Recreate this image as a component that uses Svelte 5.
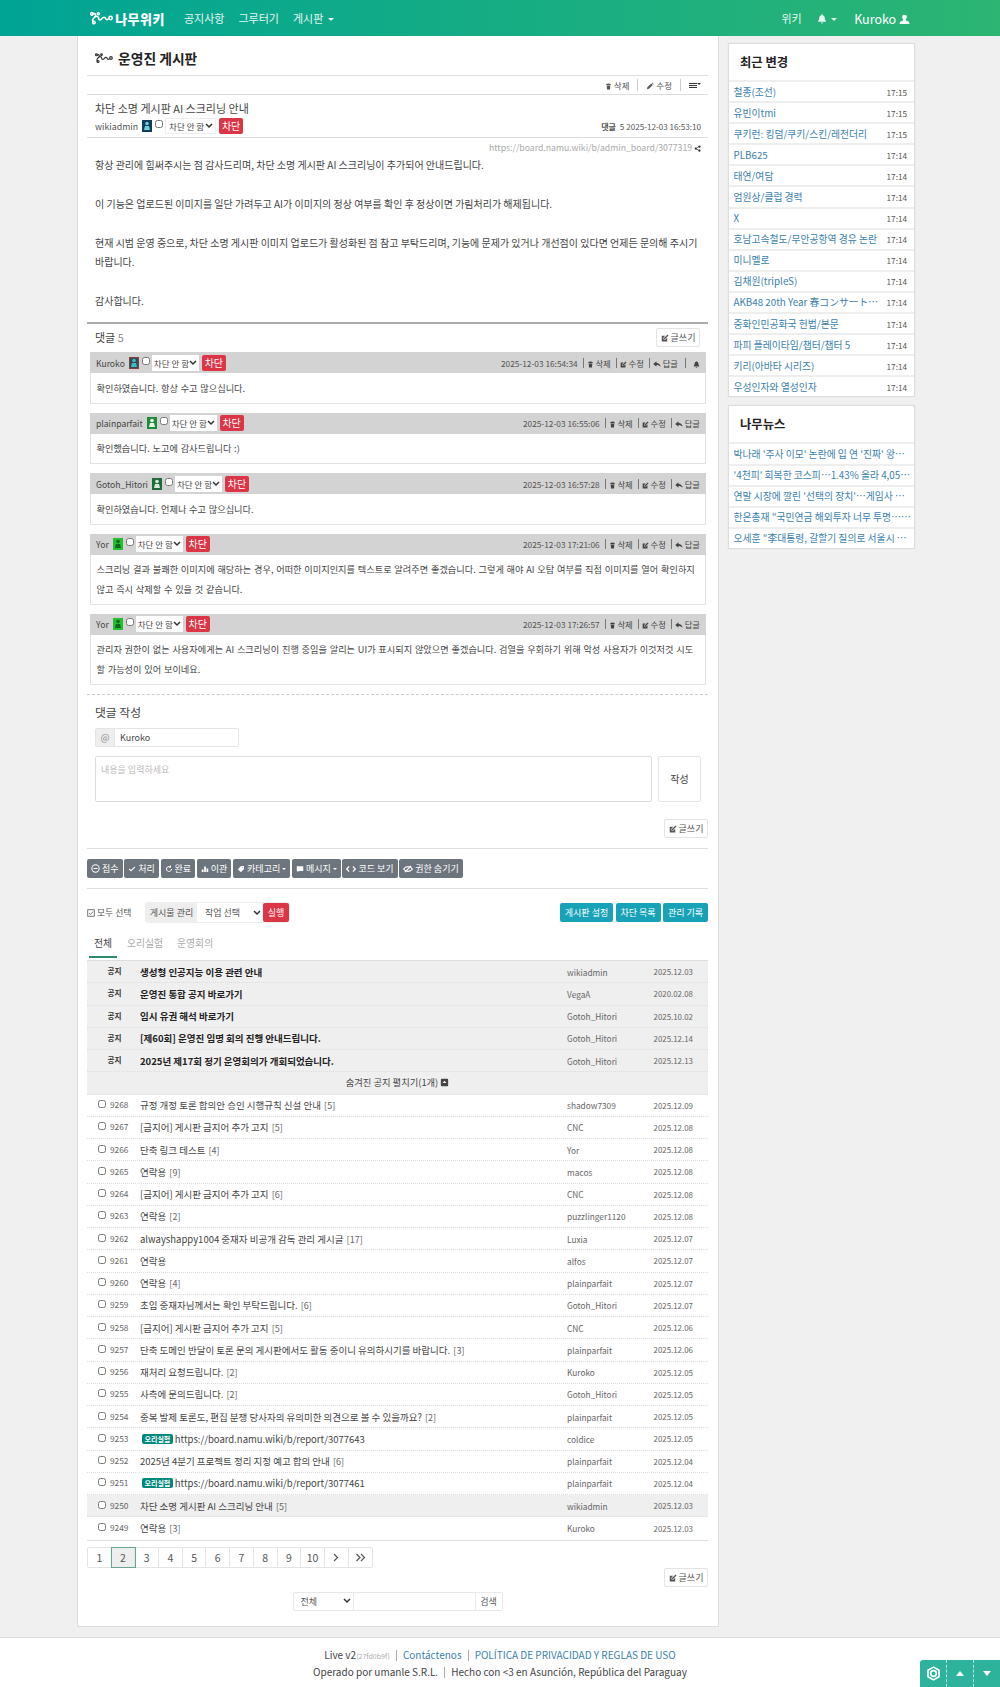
<script>
  const icons = {
    trash: "M5.5 1h5v1.5H13V5H3V2.500h2.500zM4 6h8l-.6 9H4.600z",
    pencil: "M2 14.500l.8-3.800L10.500 3l3 3-7.700 7.700zM11.500 2l1-1 3 3-1 1z",
    edit: "M1.500 3.500h7L5 7v4h4l3.500-3.500V15h-11zM6 10V8l7-7 2 2-7 7z",
    reply: "M7 2.500L.5 8 7 13.500V10c3.500 0 6 1 8.500 3.500C14.500 9 11.500 6.200 7 6z",
    bell: "M8 .5a1.200 1.200 0 011.200 1.300c2.300.6 3.300 2.600 3.300 5 0 2 .6 3.300 1.800 4.400V12.500H1.700v-1.300C2.900 10.100 3.500 8.800 3.500 6.800c0-2.400 1-4.400 3.300-5A1.200 1.200 0 018 .5zM6.300 13.500h3.400a1.700 1.700 0 01-3.400 0z",
    user: "M8 1a3.300 3.300 0 013.300 3.500c0 1.600-.8 3-1.500 3.700v1.200c2.200.6 5.200 1.500 5.200 3.600v1.500H1v-1.500c0-2.100 3-3 5.200-3.600V8.200C5.500 7.500 4.700 6.100 4.700 4.500A3.300 3.300 0 018 1z",
    share: "M12.500 1a2.500 2.500 0 11-1.900 4.100L6.400 7.300a2.500 2.500 0 010 1.400l4.200 2.200a2.500 2.500 0 11-.7 1.300L5.600 10a2.500 2.500 0 110-4l4.300-2.200A2.500 2.500 0 0112.500 1z",
    check: "M1.500 8.500l1.500-1.500 3 3 7-7 1.500 1.500L6 13z",
    bars: "M1.500 9h3.500v5H1.500zM6.300 3h3.500v11H6.300zM11 7h3.500v7H11z",
    tag: "M1.500 8.500L8 2h6v6l-6.500 6.500zM11.500 3.500a1 1 0 100 2 1 1 0 000-2z",
    chat: "M1.500 2.500h13v9.500H6l-3 2.500V12H1.500z",
    plusbox: "M3 1.500h10A1.500 1.500 0 0114.500 3v10a1.500 1.500 0 01-1.500 1.500H3A1.500 1.500 0 011.500 13V3A1.500 1.500 0 013 1.500zM8 5L4.500 9h7z"
  };

  const avatars = {
    Kuroko: ["#3a4a55", "#35c0c8", "#c0392b"],
    plainparfait: ["#1f8a3c", "#e8f5e8", "#1f8a3c"],
    Gotoh_Hitori: ["#1e6b3a", "#d8e8dc", "#1e6b3a"],
    Yor: ["#22c02c", "#0c6a1a", "#22c02c"],
    wikiadmin: ["#123c5c", "#6fd0d8", "#123c5c"]
  };

  const comments = [
    { who: "Kuroko", when: "2025-12-03 16:54:34", bell: true, lines: "확인하였습니다. 항상 수고 많으십니다." },
    { who: "plainparfait", when: "2025-12-03 16:55:06", lines: "확인했습니다. 노고에 감사드립니다 :)" },
    { who: "Gotoh_Hitori", when: "2025-12-03 16:57:28", lines: "확인하였습니다. 언제나 수고 많으십니다." },
    { who: "Yor", when: "2025-12-03 17:21:06", lines: "스크리닝 결과 불쾌한 이미지에 해당하는 경우, 어떠한 이미지인지를 텍스트로 알려주면 좋겠습니다. 그렇게 해야 AI 오탐 여부를 직접 이미지를 열어 확인하지 않고 즉시 삭제할 수 있을 것 같습니다." },
    { who: "Yor", when: "2025-12-03 17:26:57", lines: "관리자 권한이 없는 사용자에게는 AI 스크리닝이 진행 중임을 알리는 UI가 표시되지 않았으면 좋겠습니다. 검열을 우회하기 위해 악성 사용자가 이것저것 시도할 가능성이 있어 보이네요." }
  ];

  const notices = [
    ["생성형 인공지능 이용 관련 안내", "wikiadmin", "2025.12.03"],
    ["운영진 통합 공지 바로가기", "VegaA", "2020.02.08"],
    ["임시 유권 해석 바로가기", "Gotoh_Hitori", "2025.10.02"],
    ["[제60회] 운영진 임명 회의 진행 안내드립니다.", "Gotoh_Hitori", "2025.12.14"],
    ["2025년 제17회 정기 운영회의가 개회되었습니다.", "Gotoh_Hitori", "2025.12.13"]
  ];

  const posts = [
    [9268, "규정 개정 토론 합의안 승인 시행규칙 신설 안내", "[5]", "shadow7309", "2025.12.09"],
    [9267, "[금지어] 게시판 금지어 추가 고지", "[5]", "CNC", "2025.12.08"],
    [9266, "단축 링크 테스트", "[4]", "Yor", "2025.12.08"],
    [9265, "연락용", "[9]", "macos", "2025.12.08"],
    [9264, "[금지어] 게시판 금지어 추가 고지", "[6]", "CNC", "2025.12.08"],
    [9263, "연락용", "[2]", "puzzlinger1120", "2025.12.08"],
    [9262, "alwayshappy1004 중재자 비공개 감독 관리 게시글", "[17]", "Luxia", "2025.12.07"],
    [9261, "연락용", "", "alfos", "2025.12.07"],
    [9260, "연락용", "[4]", "plainparfait", "2025.12.07"],
    [9259, "초임 중재자님께서는 확인 부탁드립니다.", "[6]", "Gotoh_Hitori", "2025.12.07"],
    [9258, "[금지어] 게시판 금지어 추가 고지", "[5]", "CNC", "2025.12.06"],
    [9257, "단축 도메인 반달이 토론 문의 게시판에서도 활동 중이니 유의하시기를 바랍니다.", "[3]", "plainparfait", "2025.12.06"],
    [9256, "재처리 요청드립니다.", "[2]", "Kuroko", "2025.12.05"],
    [9255, "사측에 문의드립니다.", "[2]", "Gotoh_Hitori", "2025.12.05"],
    [9254, "중복 발제 토론도, 편집 분쟁 당사자의 유의미한 의견으로 볼 수 있을까요?", "[2]", "plainparfait", "2025.12.05"],
    [9253, "https://board.namu.wiki/b/report/3077643", "", "coldice", "2025.12.05", true],
    [9252, "2025년 4분기 프로젝트 정리 지정 예고 합의 안내", "[6]", "plainparfait", "2025.12.04"],
    [9251, "https://board.namu.wiki/b/report/3077461", "", "plainparfait", "2025.12.04", true],
    [9250, "차단 소명 게시판 AI 스크리닝 안내", "[5]", "wikiadmin", "2025.12.03"],
    [9249, "연락용", "[3]", "Kuroko", "2025.12.03"]
  ];

  const recent = [
    ["철종(조선)", "17:15"], ["유빈이tmi", "17:15"], ["쿠키런: 킹덤/쿠키/스킨/레전더리", "17:15"],
    ["PLB625", "17:14"], ["태연/여담", "17:14"], ["엄원상/클럽 경력", "17:14"], ["X", "17:14"],
    ["호남고속철도/무안공항역 경유 논란", "17:14"], ["미니멜로", "17:14"], ["김채원(tripleS)", "17:14"],
    ["AKB48 20th Year 春コンサート…", "17:14"], ["중화인민공화국 헌법/본문", "17:14"],
    ["파피 플레이타임/챕터/챕터 5", "17:14"], ["키리(아바타 시리즈)", "17:14"], ["우성인자와 열성인자", "17:14"]
  ];

  const news = [
    "박나래 '주사 이모' 논란에 입 연 '진짜' 왕…",
    "'4천피' 회복한 코스피…1.43% 올라 4,05…",
    "연말 시장에 깔린 '선택의 장치'…게임사 …",
    "한은총재 \"국민연금 해외투자 너무 투명……",
    "오세훈 \"李대통령, 갈할기 질의로 서울시 …"
  ];

  const tools = [
    ["minus", "접수"], ["check", "처리"], ["redo", "완료"], ["bars", "이관"],
    ["tag", "카테고리", true], ["chat", "메시지", true], ["code", "코드 보기"], ["eye", "권한 숨기기"]
  ];

  const pages = ["1", "2", "3", "4", "5", "6", "7", "8", "9", "10"];
</script>

{#snippet ico(name, size = 8)}
  <svg class="ico" width={size} height={size} viewBox="0 0 16 16" fill="currentColor"><path d={icons[name]} /></svg>
{/snippet}

{#snippet sprout(w, h, stroke)}
  <svg width={w} height={h} viewBox="0 0 36 20" fill="none" stroke={stroke} stroke-width="2.400" stroke-linecap="round">
    <path d="M4 3.500C9 2 10 6 7 9c-3 2.500-4 5-2 7M7 9c3-3 6.500-1.500 6.500 1.500 0 3 3 3.500 5 .5s5-3 6 0c.8 2 2.500 2 4 .5" />
    <circle cx="3" cy="3.500" r="2" />
    <circle cx="6" cy="17" r="2" />
    <circle cx="13" cy="3.500" r="1.600" />
    <circle cx="32" cy="10" r="2.600" />
  </svg>
{/snippet}

{#snippet avatar(who)}
  <svg class="avatar" width="10" height="12" viewBox="0 0 10 12">
    <rect width="10" height="12" fill={avatars[who][0]} stroke={avatars[who][2]} />
    <circle cx="5" cy="3.500" r="1.800" fill={avatars[who][1]} />
    <path d="M2 10l1-4h4l1 4z" fill={avatars[who][1]} />
  </svg>
{/snippet}

{#snippet blockctl()}
  <input class="tick" type="checkbox" />
  <select class="blocksel"><option>차단 안 함</option></select>
  <button class="red">차단</button>
{/snippet}

{#snippet writebtn()}
  <button class="write">{@render ico("edit", 8)} 글쓰기</button>
{/snippet}

<nav class="nav">
  <div class="brand">{@render sprout(25, 16, "#fff")}<span>나무위키</span></div>
  <a href="#a">공지사항</a>
  <a href="#a">그루터기</a>
  <a href="#a">게시판 <i class="caret"></i></a>
  <div class="navright">
    <a href="#a">위키</a>
    <a class="bell" href="#a">{@render ico("bell", 10)} <i class="caret"></i></a>
    <a class="me" href="#a">Kuroko {@render ico("user", 11)}</a>
  </div>
</nav>

<div class="page">
  <main class="article">
    <h1>{@render sprout(18, 12, "#333")}<span>운영진 게시판</span></h1>

    <div class="actions">
      <span>{@render ico("trash", 7)} 삭제</span>
      <i class="bar"></i>
      <span>{@render ico("pencil", 8)} 수정</span>
      <i class="bar"></i>
      <span class="menu"><i></i><i></i><i></i><b class="caret mini"></b></span>
    </div>

    <div class="posthead">
      <div class="posttitle">차단 소명 게시판 AI 스크리닝 안내</div>
      <div class="postmeta">
        <span class="who">wikiadmin</span>
        {@render avatar("wikiadmin")}
        {@render blockctl()}
        <span class="stats"><b>댓글</b> <span>5</span> 2025-12-03 16:53:10</span>
      </div>
    </div>

    <div class="url">https://board.namu.wiki/b/admin_board/3077319 {@render ico("share", 7)}</div>

    <div class="content">
      <p>항상 관리에 힘써주시는 점 감사드리며, 차단 소명 게시판 AI 스크리닝이 추가되어 안내드립니다.</p>
      <p><br /></p>
      <p>이 기능은 업로드된 이미지를 일단 가려두고 AI가 이미지의 정상 여부를 확인 후 정상이면 가림처리가 해제됩니다.</p>
      <p><br /></p>
      <p>현재 시범 운영 중으로, 차단 소명 게시판 이미지 업로드가 활성화된 점 참고 부탁드리며, 기능에 문제가 있거나 개선점이 있다면 언제든 문의해 주시기 바랍니다.</p>
      <p><br /></p>
      <p>감사합니다.</p>
    </div>

    <div class="cmthead">
      <span class="cmtcount">댓글 <em>5</em></span>
      {@render writebtn()}
    </div>

    {#each comments as c}
      <section class="comment">
        <header>
          <span class="who">{c.who}</span>
          {@render avatar(c.who)}
          {@render blockctl()}
          <span class="right">
            <span class="when">{c.when}</span>
            <span class="act">{@render ico("trash", 7)} 삭제</span>
            <span class="act">{@render ico("edit", 7)} 수정</span>
            <span class="act">{@render ico("reply", 8)} 답글</span>
            {#if c.bell}<span class="act bellact">{@render ico("bell", 7)}</span>{/if}
          </span>
        </header>
        <div class="cmtbody">{c.lines}</div>
      </section>
    {/each}

    <div class="compose">
      <h2>댓글 작성</h2>
      <div class="nameinput"><span>@</span><input value="Kuroko" /></div>
      <div class="textrow">
        <textarea placeholder="내용을 입력하세요"></textarea>
        <button class="submit">작성</button>
      </div>
    </div>

    <div class="writerow first">{@render writebtn()}</div>

    <div class="tools">
      {#each tools as t}
        <button class="tool">
          {#if t[0] === "minus"}
            <svg class="ico" width="9" height="9" viewBox="0 0 16 16" fill="none" stroke="currentColor" stroke-width="1.800"><circle cx="8" cy="8" r="6.500" /><path d="M4.500 8h7" /></svg>
          {:else if t[0] === "redo"}
            <svg class="ico" width="8" height="8" viewBox="0 0 16 16" fill="none" stroke="currentColor" stroke-width="2"><path d="M13 8a5 5 0 11-2-4M11 1v3.500H7.500" /></svg>
          {:else if t[0] === "code"}
            <svg class="ico" width="10" height="8" viewBox="0 0 16 12" fill="none" stroke="currentColor" stroke-width="1.800"><path d="M5 2L1 6l4 4M11 2l4 4-4 4" /></svg>
          {:else if t[0] === "eye"}
            <svg class="ico" width="10" height="8" viewBox="0 0 16 12" fill="none" stroke="currentColor" stroke-width="1.800"><path d="M1 6c3-5 11-5 14 0-3 5-11 5-14 0zM3 11L13 1" /></svg>
          {:else}
            {@render ico(t[0], 8)}
          {/if}
          {t[1]}{#if t[2]}<i class="caret mini"></i>{/if}
        </button>
      {/each}
    </div>

    <div class="selectrow">
      <label class="all">
        <svg class="ico" width="8" height="8" viewBox="0 0 16 16" fill="none" stroke="currentColor" stroke-width="1.600"><rect x="1.500" y="1.500" width="13" height="13" /><path d="M4 8l3 3 5-6" /></svg>
        모두 선택
      </label>
      <div class="batch">
        <span>게시물 관리</span>
        <select><option>작업 선택</option></select>
        <button class="red">실행</button>
      </div>
      <div class="teal">
        <button>게시판 설정</button>
        <button>차단 목록</button>
        <button>관리 기록</button>
      </div>
    </div>

    <div class="tabs">
      <a class="on" href="#a">전체</a>
      <a href="#a">오리실험</a>
      <a href="#a">운영회의</a>
    </div>

    <div class="list">
      {#each notices as n}
        <div class="row notice">
          <span class="num">공지</span>
          <span class="title">{n[0]}</span>
          <span class="author">{n[1]}</span>
          <span class="date">{n[2]}</span>
        </div>
      {/each}
      <div class="row expand">숨겨진 공지 펼치기(1개) {@render ico("plusbox", 9)}</div>
      {#each posts as p}
        <div class="row" class:here={p[0] === 9250}>
          <span class="num"><input class="tick" type="checkbox" /> <span>{p[0]}</span></span>
          <span class="title">
            {#if p[5]}<b class="chip">오리실험</b>{/if}{p[1]}
            {#if p[2]}<span class="cnt">{p[2]}</span>{/if}
          </span>
          <span class="author">{p[3]}</span>
          <span class="date">{p[4]}</span>
        </div>
      {/each}
    </div>

    <div class="pager">
      {#each pages as n}
        <a class:on={n === "2"} href="#a">{n}</a>
      {/each}
      <a href="#a" aria-label="next">
        <svg width="8" height="9" viewBox="0 0 8 9" fill="none" stroke="#555" stroke-width="1.200"><path d="M2 1l3.500 3.500L2 8" /></svg>
      </a>
      <a href="#a" aria-label="last">
        <svg width="11" height="9" viewBox="0 0 11 9" fill="none" stroke="#555" stroke-width="1.200"><path d="M1.500 1L5 4.500 1.500 8M6 1l3.500 3.500L6 8" /></svg>
      </a>
    </div>

    <div class="writerow last">{@render writebtn()}</div>

    <div class="search">
      <select><option>전체</option></select>
      <input />
      <button>검색</button>
    </div>
  </main>

  <aside class="side">
    <div class="card">
      <h3>최근 변경</h3>
      {#each recent as r}
        <div class="srow"><a href="#a">{r[0]}</a><span>{r[1]}</span></div>
      {/each}
    </div>
    <div class="card">
      <h3>나무뉴스</h3>
      {#each news as n}
        <div class="srow"><a href="#a">{n}</a></div>
      {/each}
    </div>
  </aside>
</div>

<footer class="foot">
  <div>Live v2<small>(27fd0b9f)</small><i></i><a href="#a">Contáctenos</a><i></i><a href="#a">POLÍTICA DE PRIVACIDAD Y REGLAS DE USO</a></div>
  <div>Operado por umanle S.R.L.<i></i>Hecho con &lt;3 en Asunción, República del Paraguay</div>
</footer>

<div class="float">
  <span>
    <svg width="15" height="15" viewBox="0 0 16 16" fill="none" stroke="#fff" stroke-width="1.800"><circle cx="8" cy="8" r="3" /><path d="M8 1.200l5.900 3.400v6.800L8 14.800l-5.900-3.400V4.600z" stroke-linejoin="round" /></svg>
  </span>
  <span><i class="up"></i></span>
  <span><i class="down"></i></span>
</div>

<style>
  :global(body) {
    background: #f0f0f0;
    color: #373a3c;
    font-family: "Noto Sans CJK KR", "Noto Sans", sans-serif;
    font-size: 10px;
  }
  a { color: inherit; text-decoration: none; }
  button, select, input, textarea { font-family: inherit; }
  select {
    appearance: none;
    background-image: url("data:image/svg+xml,%3Csvg xmlns='http://www.w3.org/2000/svg' width='8' height='6'%3E%3Cpath d='M1 1l3 3 3-3' fill='none' stroke='%23333' stroke-width='1.500'/%3E%3C/svg%3E");
    background-repeat: no-repeat;
    background-position: right 2px center;
  }
  .ico { vertical-align: -1px; }

  .caret {
    display: inline-block;
    border-top: 3px solid currentColor;
    border-left: 3px solid transparent;
    border-right: 3px solid transparent;
    vertical-align: 2px;
    margin-left: 2px;
  }
  .caret.mini { border-width: 2.500px 2px 0; }

  .nav {
    height: 36px;
    box-sizing: border-box;
    display: flex;
    align-items: center;
    padding-left: 90px;
    background: linear-gradient(90deg, #00a495, #2cb573);
    color: #e6f6f2;
    font-size: 11px;
  }
  .nav > a { margin-left: 14px; }
  .brand { display: flex; align-items: center; gap: 2px; width: 75px; margin-right: 5px; color: #fff; font-weight: 900; font-size: 13px; letter-spacing: 0.500px; white-space: nowrap; }
  .navright { margin-left: auto; margin-right: 90px; display: flex; align-items: center; }
  .bell { margin-left: 15px; }
  .me { margin-left: 17px; font-size: 12.500px; color: #fff; }

  .page {
    display: flex;
    align-items: flex-start;
    padding-left: 77px;
    gap: 9px;
  }

  .article {
    width: 642px;
    height: 1591px;
    box-sizing: border-box;
    padding: 0 10px 0 9px;
    background: #fff;
    border: solid #ddd;
    border-width: 0 1px 1px;
  }

  h1 {
    margin: 0;
    height: 40px;
    box-sizing: border-box;
    padding: 5px 0 0 8px;
    border-bottom: 1px solid #ddd;
    font-size: 13.800px;
    font-weight: 700;
    line-height: 18px;
    display: flex;
    gap: 5px;
    align-items: center;
    color: #222;
  }

  .actions {
    height: 19px;
    box-sizing: border-box;
    border-bottom: 1px solid #ddd;
    display: flex;
    justify-content: flex-end;
    align-items: center;
    gap: 8px;
    padding-right: 7px;
    font-size: 8.500px;
    color: #555;
  }
  .bar { width: 1px; height: 12px; background: #ccc; }
  .menu { display: inline-flex; flex-direction: column; gap: 1px; width: 12px; position: relative; }
  .menu > i { display: block; width: 8px; height: 1px; background: #333; }
  .menu > b { position: absolute; right: 0; top: 0; color: #333; }

  .posthead { height: 43px; box-sizing: border-box; border-bottom: 1px solid #ddd; padding: 4px 7px 0 8px; }
  .posttitle { font-size: 11px; line-height: 18px; color: #444; }
  .postmeta { display: flex; align-items: center; height: 18px; font-size: 8.800px; color: #555; }
  .stats { margin-left: auto; font-size: 8.100px; }
  .stats span { margin-left: 2px; }
  .who { margin-right: 4px; white-space: nowrap; }
  .avatar { flex: none; margin-right: 2px; }

  .tick {
    width: 8px;
    height: 8px;
    margin: 0 2px 4px 1px;
    flex: none;
  }
  .blocksel {
    width: 51px;
    height: 16px;
    border: 1px solid #eee;
    border-radius: 0;
    background-color: #fff;
    font-size: 8.500px;
    padding: 0 0 0 3px;
    color: #444;
    margin-right: 3px;
  }
  .red {
    background: #dc3545;
    border: 0;
    border-radius: 2px;
    color: #fff;
    height: 16px;
    width: 24px;
    padding: 0;
    font-size: 10px;
    line-height: 16px;
  }

  .url { height: 15.500px; line-height: 20px; text-align: right; padding-right: 7px; font-size: 8.700px; color: #aaa; }
  .url .ico { color: #333; }

  .content {
    padding: 1px 7px 0 8px;
    height: 167.500px;
    border-bottom: 2px solid #aaa;
    font-size: 10px;
    line-height: 19.500px;
    color: #444;
  }
  .content p { margin: 0; }

  .cmthead { height: 28px; box-sizing: border-box; display: flex; justify-content: space-between; align-items: flex-start; padding: 4px 8px 0 8px; }
  .cmtcount { font-size: 11px; color: #444; line-height: 19px; }
  .cmtcount em { font-style: normal; color: #888; }

  .write {
    width: 44px;
    height: 19px;
    box-sizing: border-box;
    padding: 0;
    background: #fff;
    border: 1px solid #e4e4e4;
    border-radius: 2px;
    font-size: 9px;
    color: #555;
    white-space: nowrap;
  }

  .comment { margin: 0 2px 9px 3px; box-sizing: border-box; border: solid #e2e2e2; border-width: 0 1px 1px; }
  .comment header {
    height: 21px;
    margin: 0 -1px;
    padding: 0 6px;
    background: #d3d3d3;
    display: flex;
    align-items: center;
    font-size: 8.600px;
    color: #444;
  }
  .comment .red { height: 16px; }
  .comment .blocksel { border: 0; width: 47px; padding-left: 2px; }
  .right { margin-left: auto; display: flex; align-items: center; font-size: 8.300px; white-space: nowrap; color: #555; }
  .act { margin-left: 5px; padding-left: 3px; border-left: 1px solid #777; line-height: 10px; color: #444; }
  .bellact { margin-left: 7px; padding-left: 7px; }
  .cmtbody { padding: 5.500px 5.500px 4.500px; font-size: 9.200px; word-spacing: 0.700px; line-height: 19.500px; color: #444; }

  .compose { margin-top: 9px; border-top: 1px dashed #ccc; padding: 0 7px 0 8px; }
  .compose h2 { margin: 8px 0 8px; font-size: 11.800px; font-weight: 400; line-height: 17px; color: #444; }
  .nameinput { display: flex; width: 144px; height: 19px; box-sizing: border-box; border: 1px solid #e4e4e4; border-radius: 2px; }
  .nameinput span { width: 18px; background: #eee; color: #888; text-align: center; line-height: 16px; font-size: 9.500px; border-right: 1px solid #e4e4e4; }
  .nameinput input { flex: 1; min-width: 0; border: 0; padding: 0 5px; font-size: 9px; color: #444; outline: none; }
  .textrow { display: flex; gap: 6px; margin-top: 9px; height: 46.500px; }
  textarea { flex: 1; resize: none; box-sizing: border-box; border: 1px solid #ddd; border-radius: 2px; padding: 5px; font-size: 9px; line-height: 15px; }
  textarea::placeholder { color: #bbb; }
  .submit { width: 43px; background: #fff; border: 1px solid #e4e4e4; border-radius: 2px; font-size: 10px; color: #444; padding: 0; }

  .writerow { display: flex; justify-content: flex-end; }
  .writerow.first { margin-top: 17px; padding-bottom: 10px; border-bottom: 1px solid #ddd; }
  .writerow.last { height: 19px; }

  .tools { display: flex; gap: 1.700px; padding: 10px 0 10px; border-bottom: 1px solid #ddd; }
  .tool {
    height: 19px;
    padding: 0 4px;
    flex: none;
    border: 0;
    border-radius: 2px;
    background: #6c757d;
    color: #fff;
    font-size: 9px;
    white-space: nowrap;
  }

  .selectrow { display: flex; align-items: center; margin-top: 14px; height: 19px; }
  .all { width: 59px; font-size: 8.800px; color: #555; white-space: nowrap; }
  .batch { display: flex; height: 19px; font-size: 9px; color: #555; box-shadow: 0 0 0 1px #eee; border-radius: 2px; }
  .batch span { width: 51px; text-align: center; line-height: 19px; background: #eee; }
  .batch select { width: 66px; border: 0; background-color: #fff; font-size: 9px; color: #555; padding-left: 8px; }
  .batch .red { height: 19px; width: 26px; font-size: 9px; }
  .teal { margin-left: auto; display: flex; gap: 2.500px; }
  .teal button { height: 19px; padding: 0; background: #17a2b8; color: #fff; border: 0; border-radius: 2px; font-size: 9px; }
  .teal button:nth-child(1) { width: 53px; }
  .teal button:nth-child(2), .teal button:nth-child(3) { width: 45px; }

  .tabs { display: flex; gap: 14px; padding: 12px 0 0 2px; height: 26px; font-size: 9.800px; color: #aaa; line-height: 19px; }
  .tabs a { padding: 0 5px; height: 24px; box-sizing: border-box; }
  .tabs .on { color: #444; border-bottom: 2px solid #2d8a6e; margin-right: -4px; }
  .tabs a + a { padding: 0; }

  .list { border-top: 1px solid #ddd; border-bottom: 1px solid #ddd; }
  .row {
    height: 22.250px;
    box-sizing: border-box;
    border-bottom: 1px dotted #ddd;
    display: grid;
    grid-template-columns: 53px 1fr 86.500px 54.500px;
    align-items: center;
    font-size: 9.500px;
    color: #444;
  }
  .row:last-child { border-bottom: 0; }
  .notice, .expand, .here { background: #efefef; }
  .notice .num { text-align: center; font-weight: 700; font-size: 7.600px; padding-left: 2px; margin-top: -2px; color: #333; }
  .notice .title { font-weight: 700; color: #222; }
  .expand { display: block; text-align: center; line-height: 21px; font-size: 9.300px; color: #444; }
  .num { font-size: 8.400px; color: #666; white-space: nowrap; padding-left: 11px; margin-top: -2px; }
  .num span { margin-left: 1px; }
  .num .tick { margin: 0 1px 0 0; vertical-align: 0; }
  .title { white-space: nowrap; overflow: hidden; }
  .cnt { margin-left: 1px; color: #666; font-size: 9px; }
  .author { font-size: 8.300px; color: #666; }
  .date { font-size: 7.900px; color: #666; }
  .chip {
    display: inline-block;
    background: #00897b;
    color: #fff;
    font-size: 7px;
    line-height: 10px;
    padding: 0 2.500px;
    margin: 0 2px;
    border-radius: 2px;
    vertical-align: 1px;
  }

  .pager { display: inline-flex; margin-top: 6px; height: 21px; border: 1px solid #e4e4e4; border-radius: 2px; box-sizing: border-box; vertical-align: top; }
  .pager a { width: 23.700px; text-align: center; line-height: 19px; font-size: 10.500px; color: #555; border-right: 1px solid #e4e4e4; box-sizing: border-box; }
  .pager a:last-child { border-right: 0; }
  .pager .on { background: #eee; box-shadow: 0 0 0 1px #6aa58f; position: relative; }

  .search { width: 210px; margin: 5px auto 0; display: flex; height: 19px; box-sizing: border-box; border: 1px solid #e8e8e8; border-radius: 2px; }
  .search select { width: 59px; border: 0; background-color: #fff; font-size: 9px; color: #555; padding-left: 7px; }
  .search input { flex: 1; min-width: 0; border: solid #e8e8e8; border-width: 0 1px; padding: 0; }
  .search button { width: 26px; background: #fff; border: 0; padding: 0; font-size: 9px; color: #555; }

  .side { width: 187px; padding-top: 7px; display: flex; flex-direction: column; gap: 8px; }
  .card { background: #fff; border: 1px solid #ddd; box-shadow: 0 0 2px rgba(0, 0, 0, 0.05); box-sizing: border-box; }
  .card h3 { margin: 0; height: 36px; padding-left: 11px; line-height: 37px; font-size: 12.300px; font-weight: 700; color: #222; box-sizing: border-box; }
  .srow {
    height: 21.100px;
    box-sizing: border-box;
    border-top: 2px solid #eee;
    display: flex;
    justify-content: space-between;
    align-items: center;
    padding: 0 7px 0 4.500px;
    white-space: nowrap;
  }
  .srow a { color: #3b7fae; font-size: 9.800px; }
  .srow span { font-size: 8.200px; color: #555; margin-left: 4px; }

  .foot {
    margin-top: 10px;
    height: 50px;
    box-sizing: border-box;
    background: #fff;
    border-top: 1px solid #ddd;
    padding-top: 9px;
    text-align: center;
    font-size: 10px;
    line-height: 15px;
    color: #444;
  }
  .foot a { color: #3b7fae; }
  .foot small { font-size: 7px; color: #aaa; }
  .foot i { display: inline-block; width: 1px; height: 11px; margin: 0 6px; background: #aaa; vertical-align: -2px; }

  .float {
    position: fixed;
    right: 0;
    bottom: 0;
    width: 80px;
    height: 27px;
    display: flex;
    background: #2db39b;
    border-radius: 3px 0 0 0;
  }
  .float span { flex: 1; display: flex; align-items: center; justify-content: center; }
  .float span + span { border-left: 1px dashed #bfe8de; }
  .up, .down { border-left: 4px solid transparent; border-right: 4px solid transparent; }
  .up { border-bottom: 5px solid #fff; }
  .down { border-top: 5px solid #fff; }
</style>
